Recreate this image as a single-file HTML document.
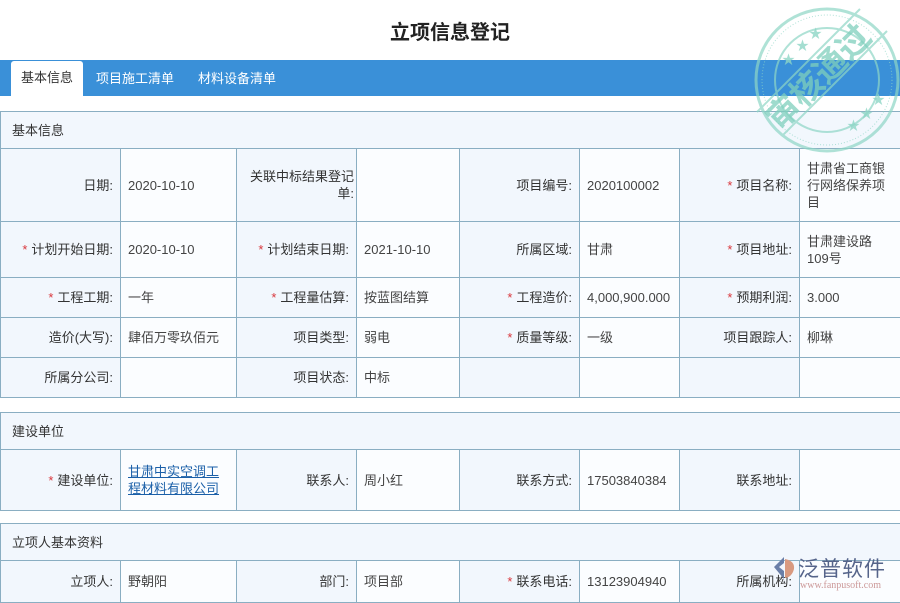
<!DOCTYPE html>
<html><head><meta charset="utf-8"><style>
*{margin:0;padding:0;box-sizing:border-box}
body{width:900px;height:600px;overflow:hidden;background:#fff;font-family:"Liberation Sans","Noto Sans CJK SC",sans-serif;font-size:13px;color:#333;position:relative}
h1{position:absolute;top:16px;left:0;width:900px;text-align:center;font-size:20px;font-weight:bold;color:#222}
.tabs{position:absolute;top:60px;left:0;width:900px;height:36px;background:#3a90d8}
.tab{position:absolute;top:8px;color:#fff;font-size:13px}
.tab.on{top:1px;left:11px;width:72px;height:35px;background:#fff;color:#333;border-radius:3px 3px 0 0;text-align:center;line-height:33px}
table{position:absolute;left:0;width:901px;border-collapse:collapse;table-layout:fixed}
td{border:1px solid #8aaec2;padding:0 7px;vertical-align:middle;line-height:17px}
td.l{background:#f2f7fd;text-align:right;padding-right:7px}
td.v{background:#fbfdff;color:#444}
td.h{background:#f2f7fd;height:37px;padding-left:11px;color:#333}
.s{color:#d9373c;margin-right:4px}
a{color:#1a5fa8;text-decoration:underline}
</style></head><body>
<h1>立项信息登记</h1>
<div class="tabs"><div class="tab on">基本信息</div><div class="tab" style="left:96px">项目施工清单</div><div class="tab" style="left:198px">材料设备清单</div></div>
<table style="top:111px">
<colgroup><col style="width:120px"><col style="width:116px"><col style="width:120px"><col style="width:103px"><col style="width:120px"><col style="width:100px"><col style="width:120px"><col style="width:101px"></colgroup>
<tr><td class="h" colspan="8">基本信息</td></tr>
<tr style="height:73px"><td class="l">日期:</td><td class="v">2020-10-10</td><td class="l" style="padding-right:2px">关联中标结果登记单:</td><td class="v"></td><td class="l">项目编号:</td><td class="v">2020100002</td><td class="l"><span class="s">*</span>项目名称:</td><td class="v">甘肃省工商银行网络保养项目</td></tr>
<tr style="height:56px"><td class="l"><span class="s">*</span>计划开始日期:</td><td class="v">2020-10-10</td><td class="l"><span class="s">*</span>计划结束日期:</td><td class="v">2021-10-10</td><td class="l">所属区域:</td><td class="v">甘肃</td><td class="l"><span class="s">*</span>项目地址:</td><td class="v">甘肃建设路109号</td></tr>
<tr style="height:40px"><td class="l"><span class="s">*</span>工程工期:</td><td class="v">一年</td><td class="l"><span class="s">*</span>工程量估算:</td><td class="v">按蓝图结算</td><td class="l"><span class="s">*</span>工程造价:</td><td class="v">4,000,900.000</td><td class="l"><span class="s">*</span>预期利润:</td><td class="v">3.000</td></tr>
<tr style="height:40px"><td class="l">造价(大写):</td><td class="v">肆佰万零玖佰元</td><td class="l">项目类型:</td><td class="v">弱电</td><td class="l"><span class="s">*</span>质量等级:</td><td class="v">一级</td><td class="l">项目跟踪人:</td><td class="v">柳琳</td></tr>
<tr style="height:40px"><td class="l">所属分公司:</td><td class="v"></td><td class="l">项目状态:</td><td class="v">中标</td><td class="l"></td><td class="v"></td><td class="l"></td><td class="v"></td></tr>
</table>
<table style="top:412px">
<colgroup><col style="width:120px"><col style="width:116px"><col style="width:120px"><col style="width:103px"><col style="width:120px"><col style="width:100px"><col style="width:120px"><col style="width:101px"></colgroup>
<tr><td class="h" colspan="8">建设单位</td></tr>
<tr style="height:61px"><td class="l"><span class="s">*</span>建设单位:</td><td class="v"><a>甘肃中实空调工程材料有限公司</a></td><td class="l">联系人:</td><td class="v">周小红</td><td class="l">联系方式:</td><td class="v" style="white-space:nowrap">17503840384</td><td class="l">联系地址:</td><td class="v"></td></tr>
</table>
<table style="top:523px">
<colgroup><col style="width:120px"><col style="width:116px"><col style="width:120px"><col style="width:103px"><col style="width:120px"><col style="width:100px"><col style="width:120px"><col style="width:101px"></colgroup>
<tr><td class="h" colspan="8">立项人基本资料</td></tr>
<tr style="height:42px"><td class="l">立项人:</td><td class="v">野朝阳</td><td class="l">部门:</td><td class="v">项目部</td><td class="l"><span class="s">*</span>联系电话:</td><td class="v" style="white-space:nowrap">13123904940</td><td class="l">所属机构:</td><td class="v"></td></tr>
</table>
<svg style="position:absolute;left:752px;top:4px" width="148" height="152" viewBox="0 0 148 152">
<g fill="none" stroke="#8ed6c6" opacity="0.7">
<circle cx="75" cy="76" r="71" stroke-width="3"/>
<circle cx="75" cy="76" r="65" stroke-width="1" stroke-dasharray="1 2"/>
<circle cx="75" cy="76" r="52" stroke-width="2"/>
<line x1="30" y1="132" x2="135" y2="27" stroke-width="2"/>
<line x1="5" y1="108" x2="108" y2="5" stroke-width="2"/>
</g>
<text x="0" y="0" transform="translate(28,128) rotate(-45)" font-size="33" font-weight="bold" fill="#7fcfbd" opacity="0.75" font-family="Noto Sans CJK SC,sans-serif">审核通过</text>
<g fill="#8ed6c6" opacity="0.8" font-size="13"><text x="30" y="60">★</text><text x="44" y="46">★</text><text x="57" y="34">★</text><text x="95" y="126">★</text><text x="108" y="114">★</text><text x="120" y="100">★</text></g>
</svg>
<div style="position:absolute;left:772px;top:555px;width:128px;height:45px">
<svg width="24" height="26" style="position:absolute;left:0;top:0" viewBox="0 0 24 26"><path d="M12 2 L2 12 L12 24 L12 16 L7 12 L12 8Z" fill="#6a7fa8"/><path d="M13 4 Q23 6 22 14 Q20 22 13 23Z" fill="#d99a80"/></svg>
<div style="position:absolute;left:26px;top:-2px;font-size:21px;color:#55648a;letter-spacing:1px;font-family:'Noto Sans CJK SC',sans-serif">泛普软件</div>
<div style="position:absolute;left:28px;top:25px;font-size:10px;color:#c99;font-family:'Liberation Serif',serif">www.fanpusoft.com</div>
</div>
</body></html>
